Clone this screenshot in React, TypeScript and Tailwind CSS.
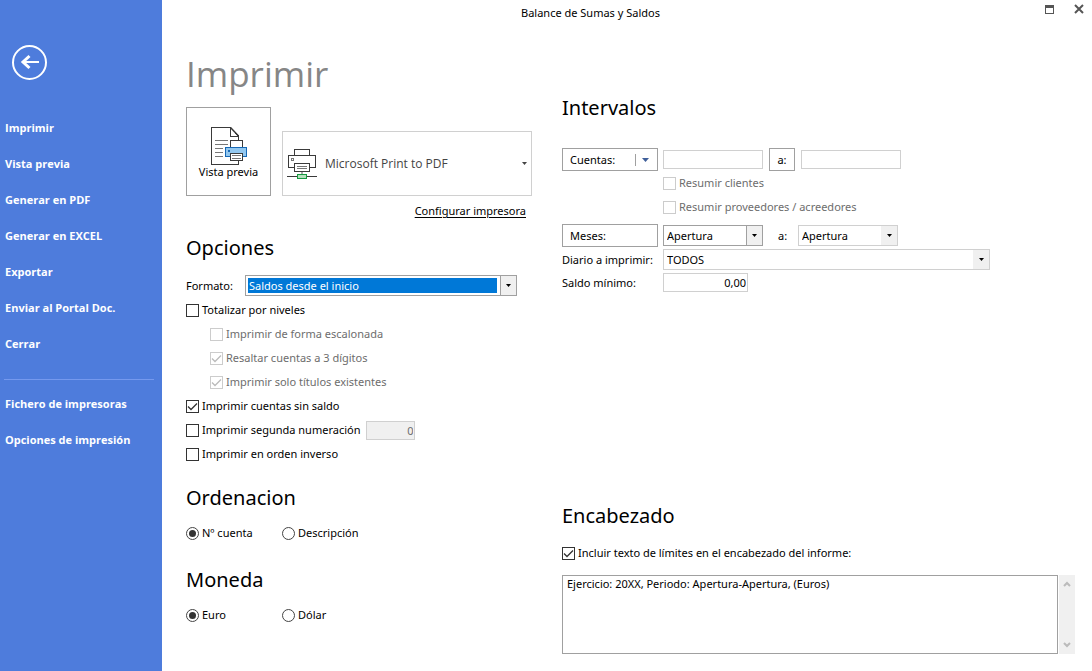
import { useState } from "react";
import clsx from "clsx";

const mainActions = [
  "Imprimir",
  "Vista previa",
  "Generar en PDF",
  "Generar en EXCEL",
  "Exportar",
  "Enviar al Portal Doc.",
  "Cerrar",
];

const setupActions = ["Fichero de impresoras", "Opciones de impresión"];

function BackIcon() {
  return (
    <svg viewBox="0 0 35 35" className="size-[35px]" fill="none" stroke="#fff" strokeWidth="2">
      <circle cx="17.5" cy="17.5" r="16.5" />
      <path d="M27 17H11" />
      <path d="M17.500 11L11 17l6.500 6" strokeWidth="3" />
    </svg>
  );
}

function PreviewIcon() {
  return (
    <svg viewBox="0 0 38 40" className="h-10 w-[38px]" fill="none" shapeRendering="crispEdges">
      <path d="M1.5 1.5h19l8 8.500v28.500h-27z" fill="#fff" stroke="#3a3a3a" />
      <path d="M20.500 1.500v9h8" stroke="#3a3a3a" />
      <path d="M20.500 1.500l8 8.500" stroke="#3a3a3a" shapeRendering="auto" strokeWidth="1.500" />
      <path d="M5 14.500h13M5 18.500h13M5 22.500h8M5 26.500h8M5 30.500h8" stroke="#777" />
      <path d="M20.500 14.500h12v8h-12z" fill="#fff" stroke="#3a3a3a" />
      <path d="M15.500 21.500h21v9h-21z" fill="#92c7ef" stroke="#1668b5" />
      <path d="M18 23.500h2v2h-2z" fill="#1668b5" />
      <path d="M20.500 27.500h12v7h-12z" fill="#fff" stroke="#3a3a3a" />
      <path d="M22 29.500h9M22 32.500h9" stroke="#777" />
    </svg>
  );
}

function NetworkPrinterIcon() {
  return (
    <svg viewBox="0 0 30 32" className="h-8 w-[30px]" fill="none" shapeRendering="crispEdges">
      <path d="M7.500 7.500v-6h15v6" stroke="#3a3a3a" />
      <path d="M1.500 7.500h27v12h-27z" fill="#fff" stroke="#3a3a3a" />
      <path d="M4.500 10.500h2v2h-2z" stroke="#777" />
      <path d="M7.500 15.500h15v8h-15z" fill="#fff" stroke="#3a3a3a" />
      <path d="M10 18.500h10M10 20.500h10" stroke="#777" />
      <path d="M15 24v3" stroke="#aaa" strokeWidth="2" />
      <path d="M0 28.500h30" stroke="#3a3a3a" />
      <path d="M10.500 26.500h9v4h-9z" fill="#b5e0bd" stroke="#15993f" />
    </svg>
  );
}

function Arrow({ className }: { className?: string }) {
  return (
    <svg viewBox="0 0 5 3" className={clsx("h-[3px] w-[5px]", className)} fill="currentColor">
      <path d="M0 0h5L2.500 3z" />
    </svg>
  );
}

interface CheckProps {
  label: string;
  checked?: boolean;
  disabled?: boolean;
}

function Check({ label, checked = false, disabled }: CheckProps) {
  const [on, setOn] = useState(checked);
  return (
    <label className={clsx("flex h-6 items-center gap-[3px]", disabled && "text-[#6d6d6d]")}>
      <span className="relative size-[13px] shrink-0">
        <input
          type="checkbox"
          checked={on}
          disabled={disabled}
          onChange={(e) => setOn(e.target.checked)}
          className="block size-[13px] appearance-none border border-[#333] bg-white disabled:border-[#ccc]"
        />
        {on && (
          <svg
            viewBox="0 0 13 13"
            className={clsx("pointer-events-none absolute inset-0", disabled ? "text-[#bbb]" : "text-[#333]")}
            fill="none"
            stroke="currentColor"
            strokeWidth="1.3"
          >
            <path d="M2 6.500l3 3L11 3.500" />
          </svg>
        )}
      </span>
      <span>{label}</span>
    </label>
  );
}

function RadioPair({ name, options }: { name: string; options: string[] }) {
  return (
    <div className="flex h-6 items-center">
      {options.map((option, i) => (
        <label key={option} className="flex w-24 items-center gap-[3px]">
          <input
            type="radio"
            name={name}
            defaultChecked={i === 0}
            className="grid size-[13px] shrink-0 appearance-none place-content-center rounded-full border border-[#444]
              checked:before:size-[7px] checked:before:rounded-full checked:before:bg-[#333]"
          />
          <span>{option}</span>
        </label>
      ))}
    </div>
  );
}

interface ComboProps {
  id: string;
  value: string;
  label?: string;
  className?: string;
  dark?: boolean;
  selected?: boolean;
}

function Combo({ id, value, label, className, dark, selected }: ComboProps) {
  return (
    <div className={clsx("relative h-[21px] border", dark ? "border-[#a0a0a0]" : "border-[#d0d0d0]", className)}>
      <select
        id={id}
        aria-label={label}
        className={clsx(
          "block h-full w-full appearance-none outline-none",
          selected ? "bg-[#0078d7] bg-clip-content py-0.5 pr-[19px] pl-0.5 indent-px leading-[15px] text-white" : "pr-4 pl-[3px]",
        )}
      >
        <option>{value}</option>
      </select>
      <span
        className={clsx(
          "pointer-events-none absolute inset-y-0 right-0 flex w-4 items-center justify-center bg-[#f0f0f0] text-black",
          dark && "border-l border-[#a0a0a0]",
        )}
      >
        <Arrow />
      </span>
    </div>
  );
}

function Heading({ children }: { children: React.ReactNode }) {
  return <h2 className="h-8 text-xl leading-8">{children}</h2>;
}

export default function App() {
  return (
    <div className="flex min-h-screen bg-white font-['Noto_Sans',sans-serif] text-[11px] leading-4 text-black">
      <aside className="w-[162px] shrink-0 bg-[#4e7cdc] pt-[45px] text-white">
        <button type="button" aria-label="Volver" className="ml-3 block">
          <BackIcon />
        </button>
        <nav className="mt-[30px] font-['Open_Sans',sans-serif] font-bold">
          {mainActions.map((action) => (
            <button key={action} type="button" className="block h-9 w-full pl-[5px] text-left">
              {action}
            </button>
          ))}
          <hr className="mt-[17px] mr-2 mb-1.5 ml-1 border-[#7599ee]" />
          {setupActions.map((action) => (
            <button key={action} type="button" className="block h-9 w-full pl-[5px] text-left">
              {action}
            </button>
          ))}
        </nav>
      </aside>

      <main className="min-w-0 flex-1 pr-[17px] pl-6">
        <header className="grid h-[26px] grid-cols-[1fr_auto_1fr] items-center">
          <span />
          <span className="mr-20">Balance de Sumas y Saldos</span>
          <div className="-mr-[9px] flex items-start justify-end gap-5 self-start pt-1 text-[#555]">
            <button type="button" aria-label="Maximizar">
              <svg viewBox="0 0 10 10" className="size-[10px]" fill="none" stroke="currentColor" shapeRendering="crispEdges">
                <path d="M1.500 1.500h8v8h-8z" />
                <path d="M1 2.500h9" strokeWidth="2" />
              </svg>
            </button>
            <button type="button" aria-label="Cerrar ventana">
              <svg viewBox="0 0 10 10" className="size-[10px]" fill="none" stroke="currentColor" strokeWidth="2">
                <path d="M1 1l8 8M9 1L1 9" />
              </svg>
            </button>
          </div>
        </header>

        <div className="grid grid-cols-[346px_1fr] gap-x-[30px]">
          <div>
            <h1 className="mt-[22px] h-[52px] font-['Open_Sans',sans-serif] text-[35px] leading-[52px] text-[#868686]">
              Imprimir
            </h1>

            <div className="mt-[7px] flex items-end gap-[11px]">
              <button
                type="button"
                className="flex h-[89px] w-[85px] flex-col items-center border border-[#a0a0a0] pt-[18px]"
              >
                <PreviewIcon />
                <span className="-mt-0.5">Vista previa</span>
              </button>
              <div className="relative h-[65px] flex-1 border border-[#d0d0d0]">
                <select
                  aria-label="Impresora"
                  className="block h-full w-full appearance-none pr-4 pl-[42px] font-['Open_Sans',sans-serif] text-xs text-[#444] outline-none"
                >
                  <option>Microsoft Print to PDF</option>
                </select>
                <div className="pointer-events-none absolute inset-0 flex items-center justify-between pr-1 pl-1 text-[#444]">
                  <NetworkPrinterIcon />
                  <Arrow />
                </div>
              </div>
            </div>

            <div className="mt-[7px] flex h-4 justify-end pr-1.5">
              <a href="#configurar" className="underline underline-offset-2">
                Configurar impresora
              </a>
            </div>

            <section className="mt-[13px]">
              <Heading>Opciones</Heading>
              <div className="mt-[11px] mb-0.5 flex items-center">
                <label htmlFor="formato" className="w-[59px]">
                  Formato:
                </label>
                <Combo id="formato" value="Saldos desde el inicio" className="w-[272px]" dark selected />
              </div>
              <Check label="Totalizar por niveles" />
              <div className="pl-6">
                <Check label="Imprimir de forma escalonada" disabled />
                <Check label="Resaltar cuentas a 3 dígitos" checked disabled />
                <Check label="Imprimir solo títulos existentes" checked disabled />
              </div>
              <Check label="Imprimir cuentas sin saldo" checked />
              <div className="flex items-center gap-1.5">
                <Check label="Imprimir segunda numeración" />
                <input
                  type="text"
                  aria-label="Segunda numeración"
                  defaultValue="0"
                  disabled
                  className="h-[19px] w-[49px] border border-[#d0d0d0] bg-[#f0f0f0] px-px text-right text-[#6d6d6d]"
                />
              </div>
              <Check label="Imprimir en orden inverso" />
            </section>

            <section className="mt-4">
              <Heading>Ordenacion</Heading>
              <div className="mt-[7px]">
                <RadioPair name="ordenacion" options={["Nº cuenta", "Descripción"]} />
              </div>
            </section>

            <section className="mt-[19px]">
              <Heading>Moneda</Heading>
              <div className="mt-[7px]">
                <RadioPair name="moneda" options={["Euro", "Dólar"]} />
              </div>
            </section>
          </div>

          <div className="pt-[66px]">
            <section>
              <Heading>Intervalos</Heading>
              <div className="mt-6 flex items-center">
                <button
                  type="button"
                  className="flex h-[23px] w-24 items-center justify-between border border-[#a0a0a0] pr-2 pl-[7px]"
                >
                  <span>Cuentas:</span>
                  <span className="flex h-3 items-center border-l border-[#a0a0a0] pl-1.5 text-[#3f5f9a]">
                    <svg viewBox="0 0 7 4" className="h-1 w-[7px]" fill="currentColor">
                      <path d="M0 0h7L3.500 4z" />
                    </svg>
                  </span>
                </button>
                <input
                  type="text"
                  aria-label="Cuenta inicial"
                  className="ml-[5px] h-[19px] w-[100px] border border-[#d0d0d0] px-[3px]"
                />
                <button type="button" className="mx-1.5 h-[23px] w-[26px] border border-[#a0a0a0]">
                  a:
                </button>
                <input
                  type="text"
                  aria-label="Cuenta final"
                  className="h-[19px] w-[100px] border border-[#d0d0d0] px-[3px]"
                />
              </div>
              <div className="mb-[5px] pl-[101px]">
                <Check label="Resumir clientes" disabled />
                <Check label="Resumir proveedores / acreedores" disabled />
              </div>
              <div className="flex items-center">
                <button type="button" className="h-[23px] w-24 border border-[#a0a0a0] pl-[7px] text-left">
                  Meses:
                </button>
                <Combo id="mes-inicial" label="Mes inicial" value="Apertura" className="ml-[5px] w-[100px]" dark />
                <span className="w-[35px] pl-[15px]">a:</span>
                <Combo id="mes-final" label="Mes final" value="Apertura" className="w-[100px]" />
              </div>
              <div className="mt-0.5 flex items-center">
                <label htmlFor="diario" className="w-[101px]">
                  Diario a imprimir:
                </label>
                <Combo id="diario" value="TODOS" className="mr-[85px] flex-1" />
              </div>
              <div className="mt-[3px] flex items-center">
                <label htmlFor="saldo" className="w-[101px]">
                  Saldo mínimo:
                </label>
                <input
                  id="saldo"
                  type="text"
                  defaultValue="0,00"
                  className="h-[19px] w-[85px] border border-[#d0d0d0] px-px text-right"
                />
              </div>
            </section>

            <section className="mt-52">
              <Heading>Encabezado</Heading>
              <div className="mt-[9px]">
                <Check label="Incluir texto de límites en el encabezado del informe:" checked />
              </div>
              <div className="mt-[10px] flex h-[79px] gap-px">
                <textarea
                  aria-label="Texto del encabezado"
                  defaultValue="Ejercicio: 20XX, Periodo: Apertura-Apertura, (Euros)"
                  className="flex-1 resize-none border border-[#a0a0a0] px-1 leading-4 outline-none"
                />
                <div className="flex w-4 flex-col items-center justify-between bg-[#f0f0f0] py-1.5 text-[#bbb]">
                  <svg viewBox="0 0 8 6" className="h-1.5 w-2" fill="none" stroke="currentColor" strokeWidth="2">
                    <path d="M1 5l3-3 3 3" />
                  </svg>
                  <svg viewBox="0 0 8 6" className="h-1.5 w-2" fill="none" stroke="currentColor" strokeWidth="2">
                    <path d="M1 1l3 3 3-3" />
                  </svg>
                </div>
              </div>
            </section>
          </div>
        </div>
      </main>
    </div>
  );
}
